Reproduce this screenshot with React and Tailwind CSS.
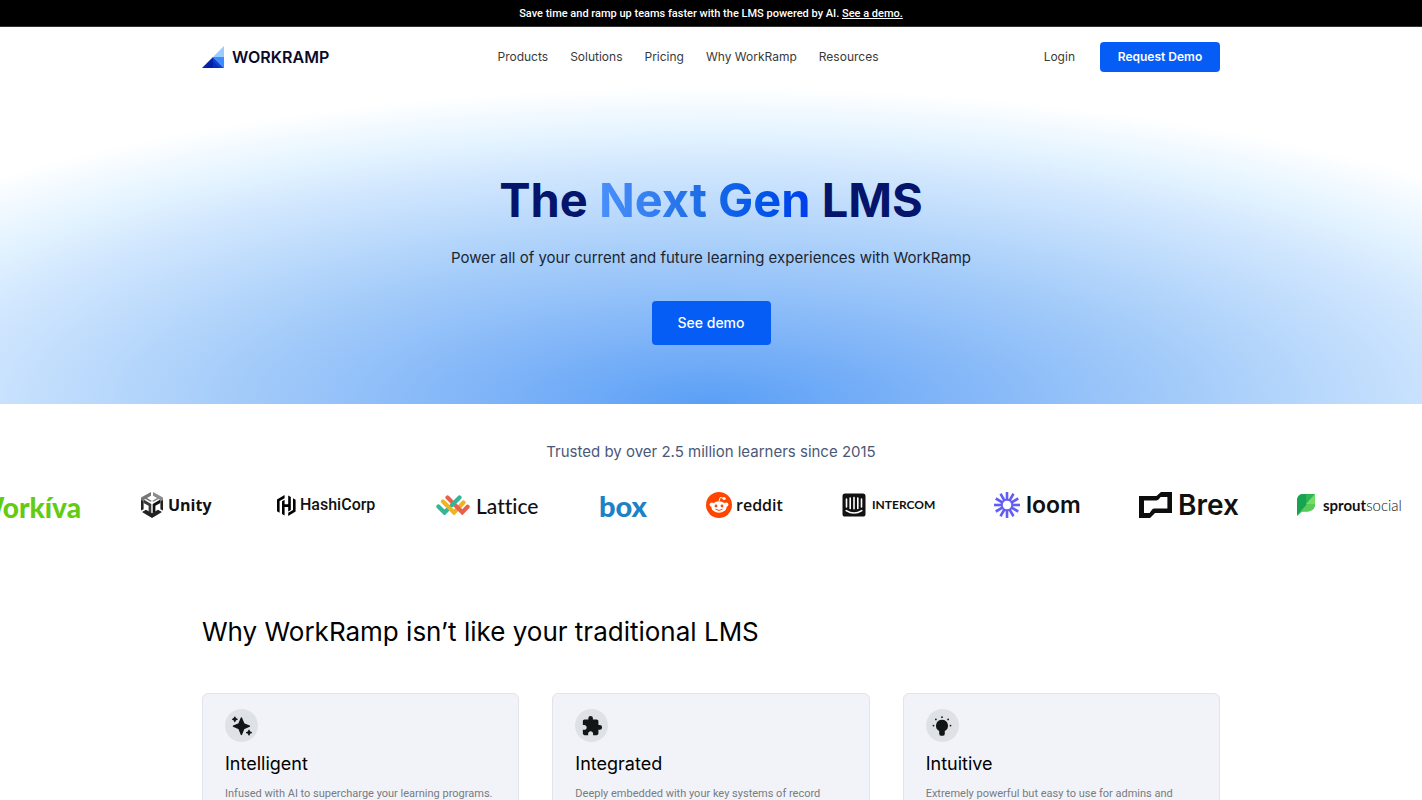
import React from 'react';
import { MdExtension } from 'react-icons/md';

const navLinks = ['Products', 'Solutions', 'Pricing', 'Why WorkRamp', 'Resources'];

const WorkRampMark = () => (
  <svg viewBox="0 0 22 22" className="h-[22px] w-[22px]" aria-hidden="true">
    <path d="M22 0V11H11Z" fill="#9cccff" />
    <path d="M11 11H22V22Z" fill="#3d8bff" />
    <path d="M11 11L22 22H11Z" fill="#0a45e0" />
    <path d="M11 11V22H0Z" fill="#0624a8" />
    <path d="M11 15L18 22H4Z" fill="#0418a0" opacity="0.5" />
  </svg>
);

const UnityMark = () => (
  <svg viewBox="0 0 24 26" className="h-[26px] w-6" aria-hidden="true">
    <path d="M11 0L1 5.6V11L3.6 9.4V8L5.4 7L10.4 9.8L12 8.9L7 6L11 3.8Z" fill="#777" />
    <path d="M13 0L23 5.6V11L20.4 9.4V8L18.6 7L13.6 9.8L12 8.9L17 6L13 3.8Z" fill="#8d8d8d" />
    <path d="M3.6 7.6L11.3 12V21.4L8.6 19.8V13.8L3.6 11Z" fill="#3a3a3a" />
    <path d="M20.4 7.6L12.7 12V21.4L15.4 19.8V13.8L20.4 11Z" fill="#111" />
    <path d="M1 8V18.6L3.6 17.2V9.4Z" fill="#222" />
    <path d="M23 8V18.6L20.4 17.2V9.4Z" fill="#222" />
    <path d="M2 20L6 17.7L12 21.2L18 17.7L22 20L12 26Z" fill="#222" />
  </svg>
);

const HashiCorpMark = () => (
  <svg viewBox="0 0 19 21" className="h-[21px] w-[19px]" aria-hidden="true">
    <path d="M7.6 0L0 4.4V16.2L2.6 17.8V6L7.6 3.2Z" fill="#000" />
    <path d="M7.6 4.8L5 6.3V18.9L7.6 20.6V12H11.2V16.4L13.8 14.9V2.1L11.2 .4V9.2H7.6Z" fill="#000" />
    <path d="M16 3.2L18.6 4.8V16.6L11.2 21V17.8L16 15Z" fill="#000" />
  </svg>
);

const LatticeMark = () => (
  <svg viewBox="0 0 34 20" className="h-5 w-[34px]" fill="none" strokeWidth="4.2" strokeLinecap="round" aria-hidden="true">
    <path d="M2.4 11.5L8.5 17.6L13.5 12.6" stroke="#35b597" />
    <path d="M7 6.5L18 17.5L27.5 7.5" stroke="#f0b323" />
    <path d="M11.5 2.4L26.3 17.3L31.6 11.8" stroke="#e6624f" />
    <path d="M23.5 2.4L16 10" stroke="#35b597" />
  </svg>
);

const RedditMark = () => (
  <svg viewBox="0 0 26 26" className="h-[26px] w-[26px]" aria-hidden="true">
    <circle cx="13" cy="13" r="13" fill="#ff4500" />
    <path d="M13 9.5L14.2 5.5L18 6.4" fill="none" stroke="#fff" strokeWidth="1" />
    <circle cx="18.2" cy="6.5" r="1.6" fill="#fff" />
    <circle cx="5.8" cy="12.6" r="2.2" fill="#fff" />
    <circle cx="20.2" cy="12.6" r="2.2" fill="#fff" />
    <ellipse cx="13" cy="15" rx="7.6" ry="5.8" fill="#fff" />
    <circle cx="10" cy="14" r="1.4" fill="#ff4500" />
    <circle cx="16" cy="14" r="1.4" fill="#ff4500" />
    <path d="M9.8 17.4Q13 19.8 16.2 17.4" fill="none" stroke="#ff4500" strokeWidth="1" strokeLinecap="round" />
  </svg>
);

const IntercomMark = () => (
  <svg viewBox="0 0 24 24" className="h-6 w-6" strokeLinecap="round" aria-hidden="true">
    <rect width="23" height="23" x="0.5" y="0.5" rx="2.6" fill="#111" />
    <path d="M4.5 6V14M8.2 5V15.5M12 4.6V15.8M15.8 5V15.5M19.5 6V14" stroke="#fff" strokeWidth="1.6" />
    <path d="M4.2 17.6Q12 22.4 19.8 17.6" fill="none" stroke="#fff" strokeWidth="1.6" />
  </svg>
);

const LoomMark = () => (
  <svg viewBox="0 0 26 26" className="h-[26px] w-[26px]" aria-hidden="true">
    {[0, 30, 60, 90, 120, 150, 180, 210, 240, 270, 300, 330].map((angle) => (
      <rect key={angle} x="11.7" y="0" width="2.6" height="8.6" fill="#625df5" transform={`rotate(${angle} 13 13)`} />
    ))}
    <circle cx="13" cy="13" r="5.4" fill="none" stroke="#625df5" strokeWidth="1.8" />
  </svg>
);

const BrexMark = () => (
  <svg viewBox="0 0 33 26" className="h-[26px] w-[33px]" aria-hidden="true">
    <path
      d="M22 0L17.5 4H0V26H11L16 21H33V0ZM5 8.4H17.5Q19.6 8.4 20.4 6.6L21.6 5H28.4V16.6H15.5Q13.4 16.6 12.4 18.6L10.6 21H5Z"
      fill="#0d0d0d"
      fillRule="evenodd"
    />
  </svg>
);

const SproutMark = () => (
  <svg viewBox="0 0 18 22" className="h-[22px] w-[18px]" aria-hidden="true">
    <path d="M6 0H18V10C18 15 14.5 17.5 10 17.5H5L0 22V7C0 3 2 0 6 0Z" fill="#2bb656" />
    <path d="M18 0V10C18 15 14.5 17.5 10 17.5H5L0 22Z" fill="#59cb59" />
    <path d="M18 0V10H9Z" fill="#75dd66" />
    <path d="M0 7C0 3 2 0 6 0H9V11L0 21Z" fill="#17a34f" />
  </svg>
);

const SparklesIcon = () => (
  <svg viewBox="0 0 20 20" className="h-5 w-5" fill="#131616" aria-hidden="true">
    <path d="M9.4 2L11.8 7.8L17.4 10.2L11.8 12.6L9.4 18.4L7 12.6L1.4 10.2L7 7.8Z" stroke="#131616" strokeWidth="1.4" strokeLinejoin="round" />
    <path d="M2.8 1L3.5 2.6L5.2 3.3L3.5 4L2.8 5.6L2.1 4L.6 3.3L2.1 2.6Z" stroke="#131616" strokeWidth="1.2" strokeLinejoin="round" />
    <path d="M17 14.2L17.7 15.9L19.4 16.6L17.7 17.3L17 19L16.3 17.3L14.6 16.6L16.3 15.9Z" stroke="#131616" strokeWidth="1.2" strokeLinejoin="round" />
  </svg>
);

const BulbIcon = () => (
  <svg viewBox="0 0 20 20" className="h-5 w-5" fill="#131616" aria-hidden="true">
    <path d="M10 3.8A6 6 0 0 0 7.2 15.1V17.6Q7.2 19.8 9 19.8H11Q12.8 19.8 12.8 17.6V15.1A6 6 0 0 0 10 3.8Z" />
    <circle cx="10" cy="1.2" r="0.9" />
    <circle cx="3.9" cy="3.4" r="0.9" />
    <circle cx="16.1" cy="3.4" r="0.9" />
    <circle cx="1.5" cy="9.6" r="0.9" />
    <circle cx="18.5" cy="9.6" r="0.9" />
  </svg>
);

const features = [
  {
    icon: <SparklesIcon />,
    title: 'Intelligent',
    text: 'Infused with AI to supercharge your learning programs.'
  },
  {
    icon: <MdExtension className="h-[22px] w-[22px] text-[#131616]" />,
    title: 'Integrated',
    text: 'Deeply embedded with your key systems of record'
  },
  {
    icon: <BulbIcon />,
    title: 'Intuitive',
    text: 'Extremely powerful but easy to use for admins and'
  }
];

const CustomerLogos = () => (
  <div className="mt-[25px] flex justify-center overflow-hidden">
    <ul className="flex h-8 shrink-0 items-center gap-[59px] pr-11 whitespace-nowrap leading-none text-[#111] [&_svg]:shrink-0">
      <li className="flex w-[104px] justify-end pt-1 font-['Lato'] text-[28px] font-black text-[#62cc12]">Workíva</li>
      <li className="flex w-[78px] items-center gap-1">
        <UnityMark />
        <span className="font-['Open_Sans'] text-base font-bold">Unity</span>
      </li>
      <li className="flex w-[100px] items-center gap-1">
        <HashiCorpMark />
        <span className="font-['Roboto'] text-base font-medium">HashiCorp</span>
      </li>
      <li className="flex w-[104px] items-center gap-1.5">
        <LatticeMark />
        <span className="font-['Lato'] text-[21px] font-medium [font-variant-ligatures:none]">Lattice</span>
      </li>
      <li className="flex w-12 items-center justify-center font-['Lato'] text-[29px] font-black text-[#1b82c6]">box</li>
      <li className="flex w-[77px] items-center gap-1">
        <RedditMark />
        <span className="font-['Open_Sans'] text-base font-semibold">reddit</span>
      </li>
      <li className="flex w-[93px] items-center gap-1.5">
        <IntercomMark />
        <span className="font-['Lato'] text-xs font-bold">INTERCOM</span>
      </li>
      <li className="flex w-[86px] items-center gap-1.5">
        <LoomMark />
        <span className="font-['Inter'] text-[23px] font-semibold">loom</span>
      </li>
      <li className="flex w-[99px] items-center gap-1.5">
        <BrexMark />
        <span className="font-['Inter'] text-[28px] font-semibold">Brex</span>
      </li>
      <li className="flex w-[104px] items-center gap-2">
        <SproutMark />
        <span className="font-['Lato'] text-[15px]">
          <span className="font-bold">sprout</span>
          <span className="font-light">social</span>
        </span>
      </li>
    </ul>
  </div>
);

const App = () => {
  return (
    <div className="min-h-screen bg-white font-['Inter',sans-serif] text-[#111]">
      {/* Announcement */}
      <div className="border-b border-[#333] bg-black pt-1.5 pb-1 text-center font-['Roboto',sans-serif] text-[11px] leading-4 font-medium text-white">
        Save time and ramp up teams faster with the LMS powered by AI.{' '}
        <a href="#demo" className="underline">See a demo.</a>
      </div>

      {/* Header */}
      <header className="mx-auto flex h-[60px] max-w-[1018px] items-center justify-between">
        <a href="#home" className="flex w-[154px] items-center gap-2 text-base font-semibold text-[#0a0a2a]">
          <WorkRampMark />
          WORKRAMP
        </a>
        <nav className="flex gap-[22px] text-xs text-[#3a3a3a]">
          {navLinks.map((label) => (
            <a key={label} href="#menu">{label}</a>
          ))}
        </nav>
        <div className="flex w-[200px] items-center justify-end gap-[25px] text-xs">
          <a href="#login" className="text-[#3a3a3a]">Login</a>
          <button type="button" className="h-[30px] w-[120px] rounded bg-[#055df5] font-semibold text-white">
            Request Demo
          </button>
        </div>
      </header>

      {/* Hero */}
      <section className="flex flex-col items-center bg-[radial-gradient(72%_100%_at_50%_100%,#5a9ff6_0%,#7fb4f8_22%,#a9cffa_50%,#d0e6fe_74%,#e5f4ff_86%,#ffffff_100%)] pt-[83px] pb-[59px]">
        <h1 className="text-[47px] leading-[60px] font-bold text-[#04156b]">
          The{' '}
          <span className="bg-linear-to-r from-[#4a90fa] via-[#1a6ce6] to-[#003cec] bg-clip-text text-transparent">Next Gen</span>{' '}
          LMS
        </h1>
        <p className="mt-4 text-[15px] leading-6 text-[#1c2630]">
          Power all of your current and future learning experiences with WorkRamp
        </p>
        <button type="button" className="mt-[31px] h-11 w-[119px] rounded bg-[#055df5] text-sm font-medium text-white">
          See demo
        </button>
      </section>

      {/* Customers */}
      <section className="pt-9">
        <p className="text-center text-[15px] leading-6 text-[#4a5878]">Trusted by over 2.5 million learners since 2015</p>
        <CustomerLogos />
      </section>

      {/* Features */}
      <section className="mx-auto max-w-[1018px] pt-[91px] pb-16">
        <h2 className="text-[26px] leading-10 text-black">Why WorkRamp isn’t like your traditional LMS</h2>
        <div className="mt-[41px] grid grid-cols-3 gap-[33px]">
          {features.map((feature) => (
            <article key={feature.title} className="rounded-md border border-[#e1e4e8] bg-[#f2f3f8] px-[22px] pt-[15px] pb-8">
              <div className="flex h-[33px] w-[33px] items-center justify-center rounded-full bg-[#dee1e5]">{feature.icon}</div>
              <h3 className="mt-2 text-lg leading-7 text-black">{feature.title}</h3>
              <p className="mt-2 font-['Roboto',sans-serif] text-[11px] leading-4 text-[#777b82]">{feature.text}</p>
            </article>
          ))}
        </div>
      </section>
    </div>
  );
};

export default App;
